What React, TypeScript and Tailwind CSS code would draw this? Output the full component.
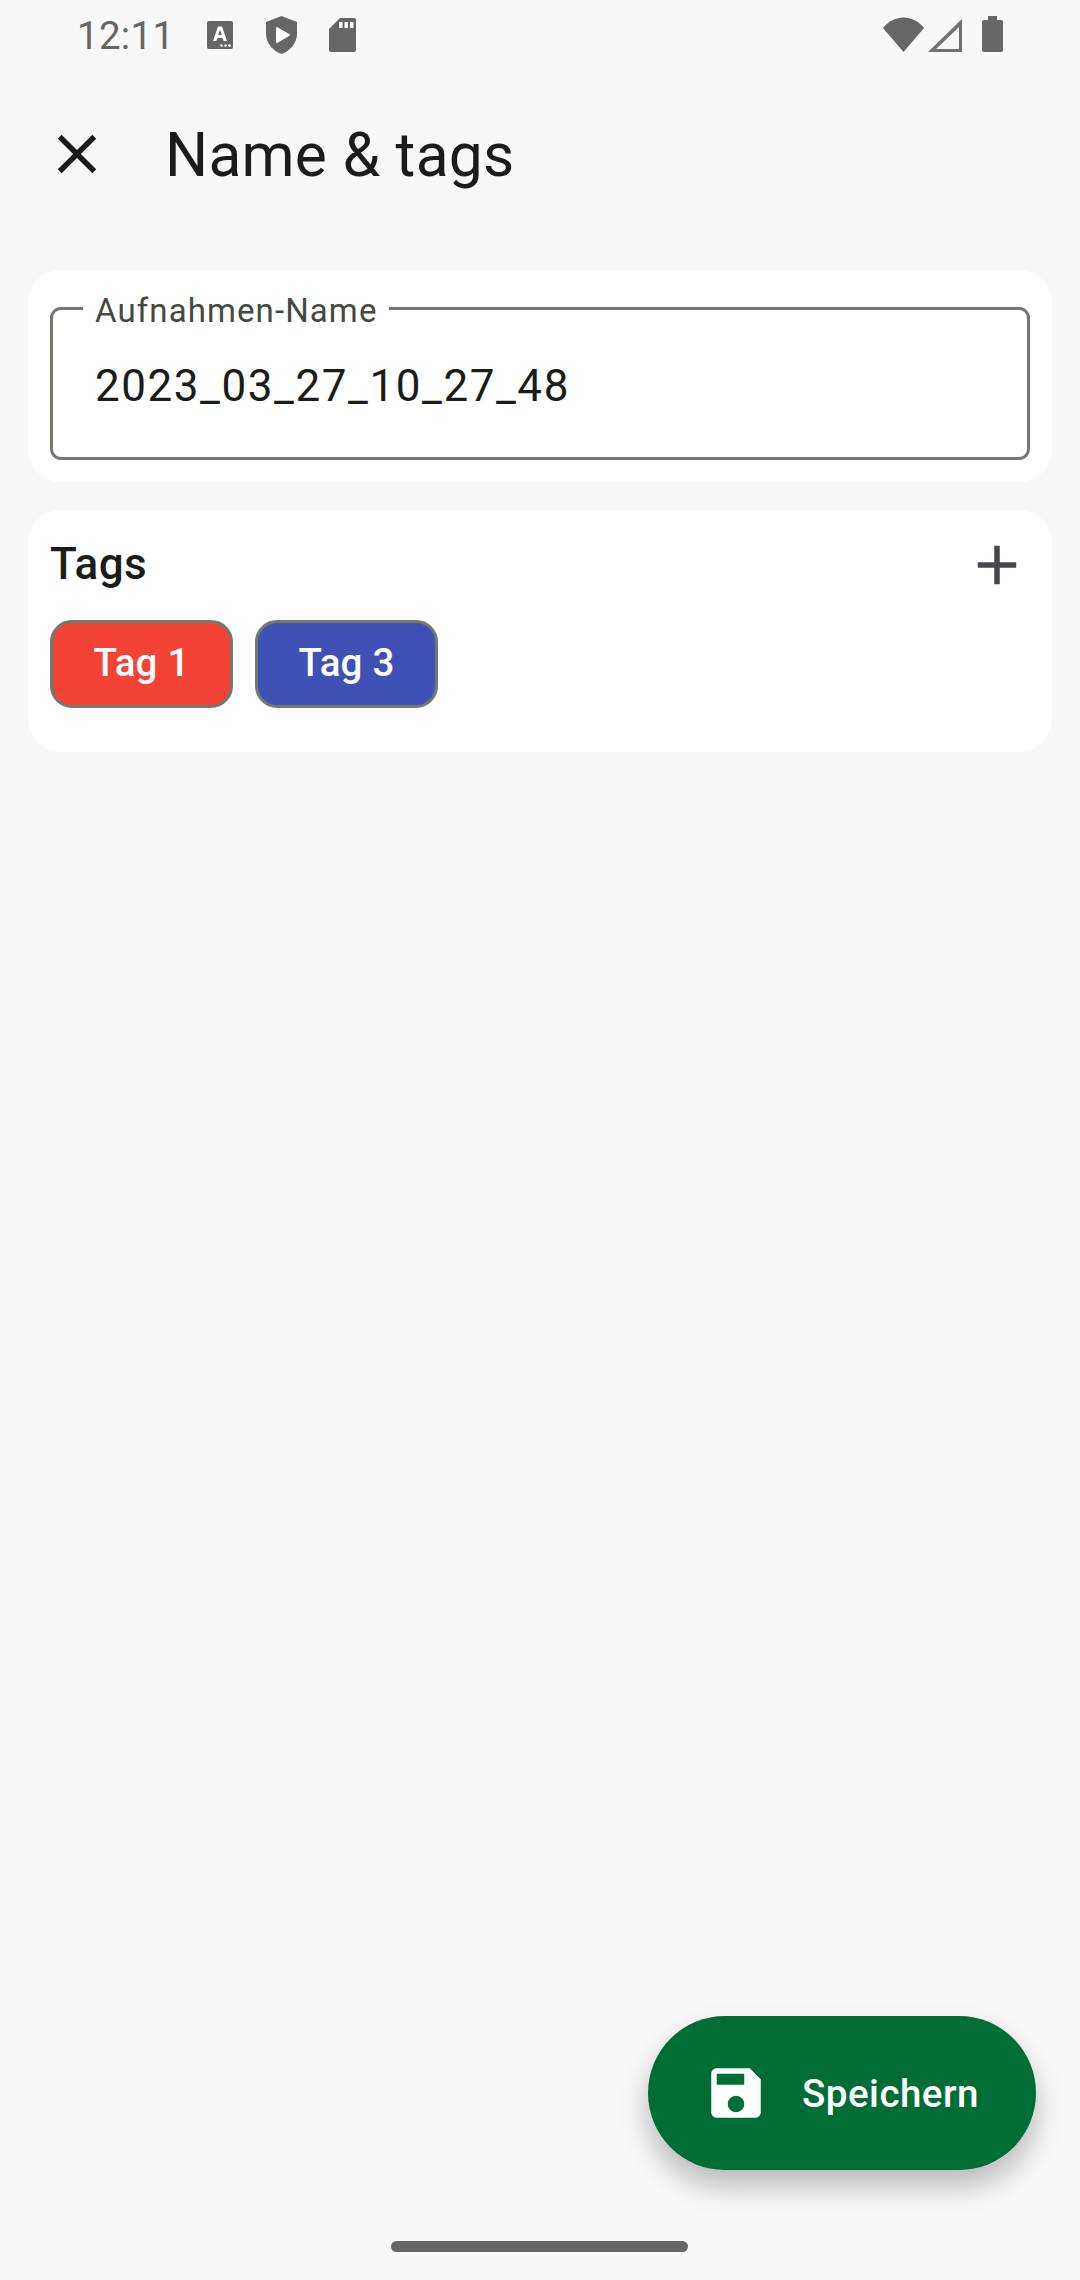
export default function App() {
  return (
    <div className="w-[1080px] h-[2280px] flex flex-col bg-[#f8f8f8] font-['Roboto',sans-serif] text-[#1a1c19] overflow-hidden">
      {/* Status bar */}
      <div className="h-[66px] shrink-0 flex items-start pl-[77px] pr-[77px] text-[#666666]">
        <span className="text-[38.5px] leading-[38px] mt-[17px] w-[130px] tracking-[0.3px]">12:11</span>
        <svg className="mt-[21px] w-[26px] h-[28px]" viewBox="0 0 26 28">
          <rect width="26" height="28" rx="2" fill="#666666" />
          <path d="M6 20 L11 5.5 h4 L20 20 h-3.4 l-1-3 h-5.2 l-1 3z M11.2 14 h3.6 L13 8.5z" fill="#fff" fillRule="evenodd" />
          <circle cx="14.5" cy="24.5" r="1.3" fill="#fff" />
          <circle cx="18.5" cy="24.5" r="1.3" fill="#fff" />
          <circle cx="22.5" cy="24.5" r="1.3" fill="#fff" />
        </svg>
        <svg className="mt-[16px] ml-[33px] w-[31px] h-[38px]" viewBox="0 0 31 38">
          <path d="M15.5 0 L31 6 V18 C31 27 24 35 15.5 38 C7 35 0 27 0 18 V6 Z" fill="#666666" />
          <path d="M11 12 L23 19 L11 26 Z" fill="#fff" stroke="#fff" strokeWidth="2" strokeLinejoin="round" />
        </svg>
        <svg className="mt-[18px] ml-[32px] w-[27px] h-[34px]" viewBox="0 0 27 34">
          <path d="M11 0 H25 a2 2 0 0 1 2 2 V32 a2 2 0 0 1 -2 2 H2 a2 2 0 0 1 -2 -2 V11 Z" fill="#666666" />
          <rect x="10" y="4" width="3.5" height="6" fill="#fff" />
          <rect x="15.5" y="4" width="3.5" height="6" fill="#fff" />
          <rect x="21" y="4" width="3.5" height="6" fill="#fff" />
        </svg>
        <div className="flex-1" />
        <svg className="mt-[17px] w-[41px] h-[35px]" viewBox="0 0 41 35">
          <path d="M0 11 C11 -3 30 -3 41 11 L20.5 35 Z" fill="#666666" />
        </svg>
        <svg className="mt-[18px] ml-[4px] w-[34px] h-[34px]" viewBox="0 0 34 34">
          <path d="M0 34 L34 1 V34 Z M8 31 H31 V9 Z" fill="#707070" fillRule="evenodd" />
        </svg>
        <svg className="mt-[16px] ml-[20px] w-[21px] h-[36px]" viewBox="0 0 21 36">
          <path d="M6 0 H15 V4 H19 a2 2 0 0 1 2 2 V34 a2 2 0 0 1 -2 2 H2 a2 2 0 0 1 -2 -2 V6 a2 2 0 0 1 2 -2 H6 Z" fill="#666666" />
        </svg>
      </div>

      {/* Content */}
      <div className="relative flex-1 overflow-hidden flex flex-col">
        {/* Toolbar */}
        <div className="h-[176px] shrink-0 flex items-center pl-[44px]">
          <svg className="w-[66px] h-[66px]" viewBox="0 0 24 24" fill="#1a1c19">
            <path d="M19 6.41 17.59 5 12 10.59 6.41 5 5 6.41 10.59 12 5 17.59 6.41 19 12 13.41 17.59 19 19 17.59 13.41 12z" />
          </svg>
          <h1 className="ml-[55px] mt-[4px] text-[60.5px] leading-[76px] font-normal tracking-[0.25px]">Name &amp; tags</h1>
        </div>

        <div className="flex flex-col gap-[28px] px-[28px] pt-[28px]">
          {/* Name card */}
          <section className="h-[212px] rounded-[33px] bg-white px-[22px] pt-[37px]">
            <div className="relative h-[153px] rounded-[11px] border-[3px] border-[#72796f] pl-[42px] flex items-center">
              <span className="absolute left-[30px] top-[-18px] bg-white px-[12px] text-[33px] leading-[38px] text-[#444941] tracking-[1.1px]">
                Aufnahmen-Name
              </span>
              <span className="mt-[5px] text-[44px] leading-[52px] tracking-[1.55px]">2023_03_27_10_27_48</span>
            </div>
          </section>

          {/* Tags card */}
          <section className="h-[242px] rounded-[33px] bg-white px-[22px] pt-[28px]">
            <div className="flex items-center justify-between h-[54px]">
              <h2 className="mb-[2px] text-[44px] leading-[52px] font-medium tracking-[0.5px]">Tags</h2>
              <svg className="w-[66px] h-[66px]" viewBox="0 0 24 24" fill="#49454f">
                <path d="M19 13h-6v6h-2v-6H5v-2h6V5h2v6h6z" />
              </svg>
            </div>
            <div className="flex gap-[22px] mt-[28px]">
              <button className="w-[183px] h-[88px] pb-[2px] rounded-[22px] border-[3px] border-[#72796f] bg-[#f44336] text-white text-[38.5px] font-medium tracking-[0.2px]">
                Tag 1
              </button>
              <button className="w-[183px] h-[88px] pb-[2px] rounded-[22px] border-[3px] border-[#72796f] bg-[#3f51b5] text-white text-[38.5px] font-medium tracking-[0.2px]">
                Tag 3
              </button>
            </div>
          </section>
        </div>

        {/* FAB */}
        <button className="absolute right-[44px] bottom-[44px] w-[388px] h-[154px] rounded-full bg-[#006d37] text-white flex items-center pl-[55px] shadow-[0_16px_30px_rgba(0,0,0,0.26)]">
          <svg className="w-[66px] h-[66px]" viewBox="0 0 24 24" fill="#ffffff">
            <path d="M17 3H5c-1.11 0-2 .9-2 2v14c0 1.1.89 2 2 2h14c1.1 0 2-.9 2-2V7l-4-4zm-5 16c-1.66 0-3-1.34-3-3s1.34-3 3-3 3 1.34 3 3-1.34 3-3 3zm3-10H5V5h10v4z" />
          </svg>
          <span className="ml-[33px] mt-[2px] text-[38.5px] font-medium tracking-[0.5px]">Speichern</span>
        </button>
      </div>

      {/* Nav bar */}
      <div className="h-[66px] shrink-0 flex justify-center pt-[27px] pr-[2px]">
        <div className="w-[297px] h-[11px] rounded-full bg-[#666666]" />
      </div>
    </div>
  );
}
